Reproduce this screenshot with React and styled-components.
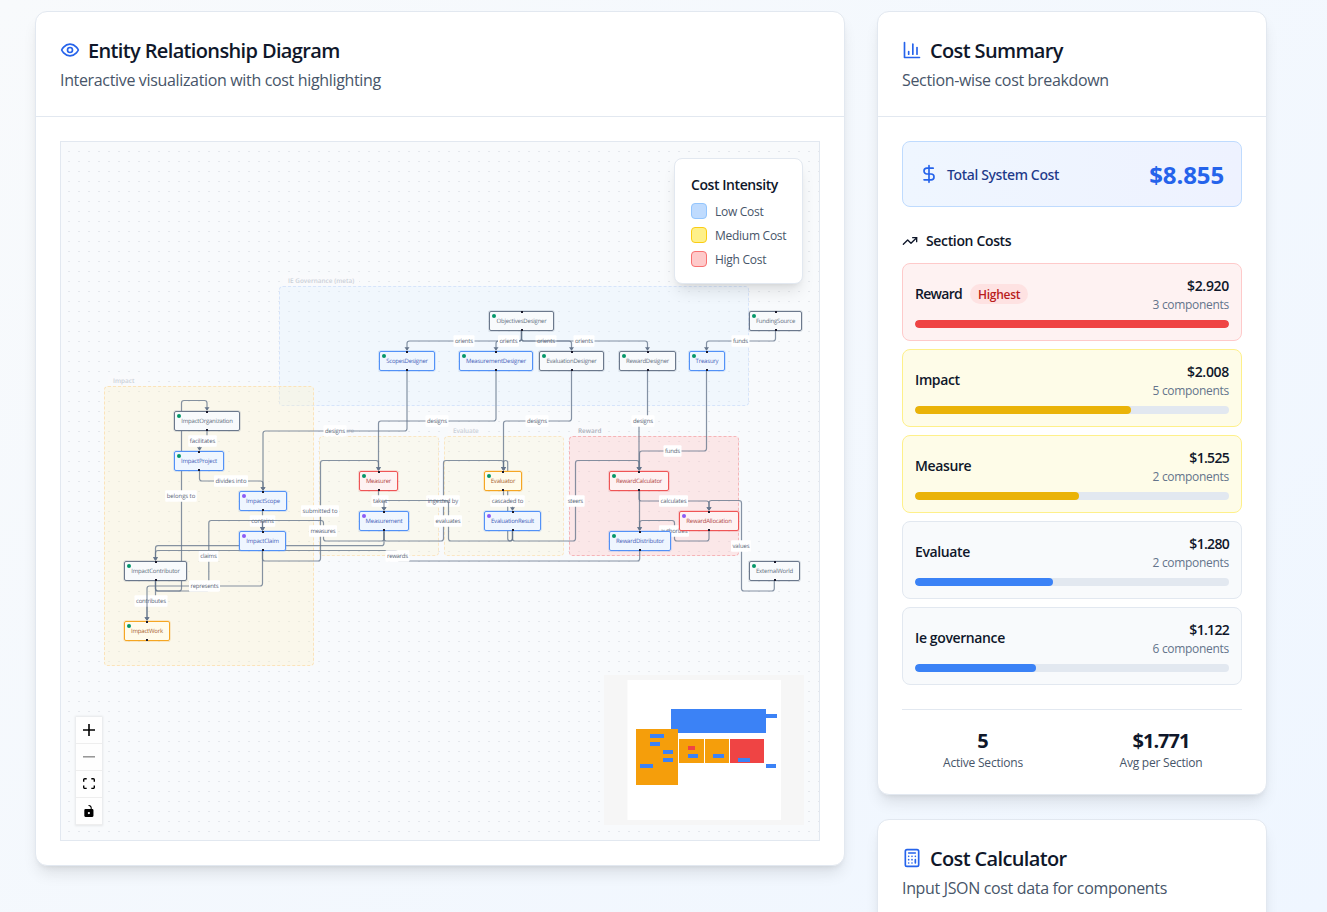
import React from "react";
import styled, { createGlobalStyle } from "styled-components";

const GlobalStyle = createGlobalStyle`
  *, *::before, *::after { box-sizing: border-box; }
  html, body { margin: 0; height: 912px; overflow: hidden; }
  body {
    font-family: "Open Sans", "Noto Sans", sans-serif;
    color: #0f172a;
    background: linear-gradient(135deg, #f8fafc 0%, #eff6ff 100%);
  }
  p, h2, h3, h4 { margin: 0; }
`;

/* ---------- page ---------- */
const Page = styled.main`
  display: grid;
  grid-template-columns: 810px 390px;
  column-gap: 32px;
  align-items: start;
  padding: 11px 0 0 35px;
  height: 912px;
  overflow: hidden;
`;
const Column = styled.div`
  display: flex;
  flex-direction: column;
  gap: 24px;
`;
const Card = styled.section`
  background: #fff;
  border: 1px solid #e2e8f0;
  border-radius: 12px;
  box-shadow: 0 10px 15px -3px rgba(0, 0, 0, 0.1), 0 4px 6px -4px rgba(0, 0, 0, 0.1);
`;
const CardHeader = styled.header`
  height: 105px;
  padding: 24px 24px 0;
  border-bottom: 1px solid #e2e8f0;
`;
const CardTitle = styled.h2`
  display: flex;
  align-items: center;
  gap: 8px;
  height: 28px;
  font-size: 20px;
  font-weight: 600;
  line-height: 28px;
  letter-spacing: -0.64px;
  svg { color: #2563eb; flex: none; }
  span { padding-top: 2px; }
`;
const CardSubtitle = styled.p`
  margin-top: 4px;
  font-size: 16px;
  line-height: 24px;
  letter-spacing: -0.34px;
  color: #475569;
`;
const CardBody = styled.div`
  padding: 24px;
`;

/* ---------- icons ---------- */
const Icon = ({ size = 20, children }) => (
  <svg width={size} height={size} viewBox="0 0 24 24" fill="none" stroke="currentColor"
    strokeWidth="2" strokeLinecap="round" strokeLinejoin="round">{children}</svg>
);
const EyeIcon = () => (
  <Icon><path d="M2 12s3-7 10-7 10 7 10 7-3 7-10 7-10-7-10-7Z" /><circle cx="12" cy="12" r="3" /></Icon>
);
const ChartIcon = () => (
  <Icon><path d="M3 3v18h18" /><path d="M18 17V9" /><path d="M13 17V5" /><path d="M8 17v-3" /></Icon>
);
const DollarIcon = () => (
  <Icon><path d="M12 2v20" /><path d="M17 5H9.5a3.5 3.5 0 0 0 0 7h5a3.5 3.5 0 0 1 0 7H6" /></Icon>
);
const TrendIcon = () => (
  <Icon size={16}><path d="M22 7l-8.5 8.5-5-5L2 17" /><path d="M16 7h6v6" /></Icon>
);
const CalculatorIcon = () => (
  <Icon>
    <rect width="16" height="20" x="4" y="2" rx="2" />
    <path d="M8 6h8M16 14v4M16 10h.01M12 10h.01M8 10h.01M12 14h.01M8 14h.01M12 18h.01M8 18h.01" />
  </Icon>
);

/* ---------- diagram canvas ---------- */
const ORIGIN_X = 61;
const ORIGIN_Y = 142;

const Canvas = styled.div`
  position: relative;
  height: 700px;
  overflow: hidden;
  background: #f8fafc;
  border: 1px solid #e2e8f0;
`;
const Layer = styled.svg`
  position: absolute;
  inset: 0;
  display: block;
`;

const groupTones = {
  blue: { fill: "rgba(224, 242, 254, 0.3)", line: "#d6e4fb" },
  amber: { fill: "rgba(254, 243, 199, 0.32)", line: "#fbe3ba" },
  pale: { fill: "rgba(254, 243, 199, 0.24)", line: "#fae6c4" },
  red: { fill: "rgba(254, 202, 202, 0.4)", line: "#f5b4b7" },
};
const Group = styled.div`
  position: absolute;
  left: ${(p) => p.$x - ORIGIN_X}px;
  top: ${(p) => p.$y - ORIGIN_Y}px;
  width: ${(p) => p.$w}px;
  height: ${(p) => p.$h}px;
  border: 1px dashed ${(p) => groupTones[p.$tone].line};
  border-radius: 4px;
  background: ${(p) => groupTones[p.$tone].fill};
`;
const GroupLabel = styled.span`
  position: absolute;
  left: 3px;
  top: -12px;
  padding: 0 5px;
  font-size: 6.4px;
  font-weight: 600;
  line-height: 11px;
  white-space: nowrap;
  text-rendering: geometricPrecision;
  letter-spacing: ${(p) => (p.$wide ? 0.02 : -0.1)}px;
  color: ${(p) => (p.$strong ? "#a9aeb9" : "#cbd0d8")};
  background: #f9fafc;
`;

const nodeTones = {
  plain: { line: "#6b788c", fill: "#f8fafc", text: "#64707f" },
  blue: { line: "#5291f7", fill: "#eff6ff", text: "#4560b8" },
  amber: { line: "#f5a623", fill: "#fffbeb", text: "#a8622f" },
  red: { line: "#ef5556", fill: "#fef2f2", text: "#b04444" },
};
const Node = styled.div`
  position: absolute;
  left: ${(p) => p.$x - ORIGIN_X}px;
  top: ${(p) => p.$y - ORIGIN_Y}px;
  width: ${(p) => p.$w}px;
  height: 20px;
  display: flex;
  align-items: center;
  justify-content: center;
  border: 1px solid ${(p) => nodeTones[p.$tone].line};
  outline: 1px solid ${(p) => nodeTones[p.$tone].line}33;
  border-radius: 2px;
  background: ${(p) => nodeTones[p.$tone].fill};
  color: ${(p) => nodeTones[p.$tone].text};
  font-size: 6px;
  letter-spacing: -0.21px;
  white-space: nowrap;
  text-rendering: geometricPrecision;
  &::before, &::after {
    content: "";
    position: absolute;
    left: calc(50% - 1px);
    width: 2px;
    height: 2px;
    background: #1a192b;
  }
  &::before { top: -1px; }
  &::after { bottom: -1px; }
`;
const StatusDot = styled.i`
  position: absolute;
  left: 2px;
  top: 2px;
  width: 4px;
  height: 4px;
  border-radius: 50%;
  background: ${(p) => (p.$artifact ? "#8b5cf6" : "#059669")};
`;

const groups = [
  { x: 279, y: 286, w: 470, h: 120, tone: "blue", label: "IE Governance (meta)", wide: true },
  { x: 104, y: 386, w: 210, h: 280, tone: "amber", label: "Impact", wide: true },
  { x: 319, y: 436, w: 120, h: 120, tone: "pale", label: "Measure" },
  { x: 444, y: 436, w: 120, h: 120, tone: "pale", label: "Evaluate" },
  { x: 569, y: 436, w: 170, h: 120, tone: "red", label: "Reward", strong: true, wide: true },
];

const nodes = [
  ["ObjectivesDesigner", 489, 311, 65, "plain"],
  ["FundingSource", 749, 311, 53, "plain"],
  ["ScopesDesigner", 379, 351, 56, "blue"],
  ["MeasurementDesigner", 459, 351, 74, "blue"],
  ["EvaluationDesigner", 539, 351, 65, "plain"],
  ["RewardDesigner", 619, 351, 57, "plain"],
  ["Treasury", 689, 351, 36, "blue"],
  ["ImpactOrganization", 174, 411, 66, "plain"],
  ["ImpactProject", 174, 451, 50, "blue"],
  ["ImpactScope", 239, 491, 48, "blue", true],
  ["ImpactClaim", 239, 531, 47, "blue", true],
  ["ImpactContributor", 124, 561, 63, "plain"],
  ["ImpactWork", 124, 621, 46, "amber"],
  ["Measurer", 359, 471, 39, "red"],
  ["Measurement", 359, 511, 50, "blue", true],
  ["Evaluator", 484, 471, 38, "amber"],
  ["EvaluationResult", 484, 511, 57, "blue", true],
  ["RewardCalculator", 609, 471, 60, "red"],
  ["RewardAllocation", 679, 511, 60, "red", true],
  ["RewardDistributor", 609, 531, 62, "blue"],
  ["ExternalWorld", 749, 561, 51, "plain"],
];

/* points, then an optional label: [text, centre x, centre y, text width] */
const edges = [
  [[[521.5, 331], [521.5, 341], [407, 341], [407, 350]], ["orients", 464, 341, 18]],
  [[[521.5, 331], [521.5, 341], [496, 341], [496, 350]], ["orients", 508.5, 341, 18]],
  [[[521.5, 331], [521.5, 341], [571.5, 341], [571.5, 350]], ["orients", 546, 341, 18]],
  [[[521.5, 331], [521.5, 341], [647.5, 341], [647.5, 350]], ["orients", 584, 341, 18]],
  [[[775.5, 331], [775.5, 341], [706.5, 341], [706.5, 350]], ["funds", 740.5, 341, 15]],
  [[[407, 371], [407, 431], [263, 431], [263, 490]], ["designs", 335, 431, 20]],
  [[[496, 371], [496, 421], [378.5, 421], [378.5, 470]], ["designs", 437, 421, 20]],
  [[[571.5, 371], [571.5, 421], [503.5, 421], [503.5, 470]], ["designs", 537, 421, 20]],
  [[[647.5, 371], [647.5, 421], [639, 421], [639, 470]], ["designs", 643, 421, 20]],
  [[[207, 431], [207, 441], [199.5, 441], [199.5, 450]], ["facilitates", 202.5, 441, 25.5]],
  [[[155.5, 581], [155.5, 591], [181.5, 591], [181.5, 400.5], [207, 400.5], [207, 410]], ["belongs to", 181, 496, 28.5]],
  [[[199.5, 471], [199.5, 481], [263, 481], [263, 490]], ["divides into", 231, 481, 31]],
  [[[262.5, 511], [262.5, 530]], ["contains", 262.5, 521, 22.5]],
  [[[155.5, 581], [155.5, 601], [147, 601], [147, 620]], ["contributes", 151, 601, 30]],
  [[[155.5, 581], [155.5, 591], [208.8, 591], [208.8, 520.5], [262.5, 520.5], [262.5, 530]], ["claims", 208.5, 556, 16.5]],
  [[[262.5, 551], [262.5, 586], [147, 586], [147, 620]], ["represents", 204.5, 586, 28]],
  [[[262.5, 551], [262.5, 561], [320.5, 561], [320.5, 460.5], [378.5, 460.5], [378.5, 470]], ["submitted to", 320, 511, 35]],
  [[[378.5, 491], [378.5, 501], [384, 501], [384, 510]], ["takes", 380, 501, 14]],
  [[[384, 531], [384, 541], [443.5, 541], [443.5, 460.5], [503.5, 460.5], [503.5, 470]], ["ingested by", 443, 501, 30.5]],
  [[[384, 531], [384, 541], [323.5, 541], [323.5, 520.5], [262.5, 520.5], [262.5, 530]], ["measures", 323, 531, 25]],
  [[[384, 531], [384, 545.7], [155.5, 545.7], [155.5, 560]]],
  [[[512.5, 531], [512.5, 541], [507.7, 541], [507.7, 460.5], [503.5, 460.5], [503.5, 470]]],
  [[[503.5, 491], [503.5, 501], [512.5, 501], [512.5, 510]], ["cascaded to", 507.5, 501, 31.5]],
  [[[512.5, 531], [512.5, 541], [448.5, 541], [448.5, 500.5], [384, 500.5], [384, 510]], ["evaluates", 448, 521, 25]],
  [[[512.5, 531], [512.5, 541], [575.5, 541], [575.5, 460.5], [639, 460.5], [639, 470]], ["steers", 575.5, 501, 15.3]],
  [[[706.5, 371], [706.5, 451], [639.5, 451], [639.5, 470]], ["funds", 672.5, 451, 15]],
  [[[639, 491], [639, 501], [709, 501], [709, 510]], ["calculates", 673.5, 501, 26]],
  [[[639.5, 491], [639.5, 530]]],
  [[[709, 531], [709, 541], [674.5, 541], [674.5, 520.5], [639.7, 520.5], [639.7, 530]], ["authorizes", 674, 531, 27]],
  [[[639.7, 551], [639.7, 561], [397.5, 561], [397.5, 550.5], [155.5, 550.5], [155.5, 560]], ["rewards", 397.5, 556, 21]],
  [[[774.3, 581], [774.3, 591], [741.5, 591], [741.5, 500.5], [709, 500.5], [709, 510]], ["values", 741, 546, 17]],
];

function roundedPath(points) {
  let d = `M${points[0][0]} ${points[0][1]}`;
  for (let i = 1; i < points.length - 1; i++) {
    const [px, py] = points[i - 1];
    const [x, y] = points[i];
    const [nx, ny] = points[i + 1];
    const before = Math.abs(px - x) + Math.abs(py - y);
    const after = Math.abs(nx - x) + Math.abs(ny - y);
    const r = Math.min(2.5, before / 2, after / 2);
    d += `L${x + Math.sign(px - x) * r} ${y + Math.sign(py - y) * r}`;
    d += `Q${x} ${y} ${x + Math.sign(nx - x) * r} ${y + Math.sign(ny - y) * r}`;
  }
  const [ex, ey] = points[points.length - 1];
  return `${d}L${ex} ${ey}`;
}

const EdgeLine = styled.path`
  fill: none;
  stroke: #64748b;
  stroke-opacity: 0.78;
  stroke-width: 1.2px;
`;
const ArrowHead = styled.path`
  fill: #64748b;
`;
const EdgeText = styled.text`
  font-size: 6px;
  fill: #5a6677;
  text-anchor: middle;
  text-rendering: geometricPrecision;
`;

function Edge({ points, label }) {
  const [ex, ey] = points[points.length - 1];
  return (
    <g>
      <EdgeLine d={roundedPath(points)} />
      <ArrowHead d={`M${ex - 2.5} ${ey - 2.8}h5L${ex} ${ey + 0.8}z`} />
      {label && (
        <>
          <rect x={label[1] - label[3] / 2 - 1.5} y={label[2] - 5.7} width={label[3] + 3} height={11.4} rx="1" fill="#fff" />
          <EdgeText x={label[1]} y={label[2] + 2} textLength={label[3]}>{label[0]}</EdgeText>
        </>
      )}
    </g>
  );
}

/* ---------- legend ---------- */
const Legend = styled.aside`
  position: absolute;
  top: 16px;
  right: 16px;
  width: 129px;
  height: 126px;
  padding: 16px 15px;
  background: #fff;
  border: 1px solid #e2e8f0;
  border-radius: 8px;
  box-shadow: 0 10px 15px -3px rgba(0, 0, 0, 0.1), 0 4px 6px -4px rgba(0, 0, 0, 0.1);
`;
const LegendTitle = styled.h4`
  margin-bottom: 8px;
  padding-left: 1px;
  font-size: 14px;
  font-weight: 600;
  line-height: 20px;
  letter-spacing: -0.43px;
  white-space: nowrap;
`;
const LegendRow = styled.div`
  display: flex;
  align-items: center;
  gap: 8px;
  height: 16px;
  margin-bottom: 8px;
  padding-left: 1px;
  font-size: 12px;
  letter-spacing: -0.27px;
  color: #475569;
  white-space: nowrap;
`;
const Swatch = styled.span`
  width: 16px;
  height: 16px;
  border-radius: 4px;
  border: 1px solid ${(p) => p.$line};
  background: ${(p) => p.$fill};
`;

/* ---------- zoom controls ---------- */
const Controls = styled.div`
  position: absolute;
  left: 15px;
  bottom: 15px;
  display: flex;
  flex-direction: column;
  box-shadow: 0 0 2px 1px rgba(0, 0, 0, 0.08);
`;
const ControlButton = styled.button`
  display: flex;
  align-items: center;
  justify-content: center;
  width: 26px;
  height: 27px;
  padding: 0;
  border: 0;
  border-bottom: 1px solid #eee;
  background: #fefefe;
  svg { width: 12px; max-height: 12px; fill-opacity: ${(p) => (p.disabled ? 0.4 : 1)}; }
`;

/* ---------- minimap ---------- */
const MiniMap = styled.svg`
  position: absolute;
  right: 15px;
  bottom: 15px;
  display: block;
`;
const miniRects = [
  [671, 709, 95, 24, "#3b82f6"], [636, 729, 42, 56, "#f59e0b"], [679, 739, 25, 24, "#f59e0b"],
  [705, 739, 24, 24, "#f59e0b"], [730, 739, 34, 24, "#ef4444"], [766, 714, 11, 4, "#3b82f6"],
  [650, 734, 14, 4, "#3b82f6"], [650, 742, 10, 4, "#3b82f6"], [663, 750, 10, 4, "#3b82f6"],
  [663, 758, 10, 4, "#3b82f6"], [640, 764, 13, 4, "#3b82f6"], [688, 746, 7, 4, "#ef4444"],
  [688, 754, 10, 4, "#3b82f6"], [713, 754, 11, 4, "#3b82f6"], [738, 758, 12, 4, "#3b82f6"],
  [766, 764, 10, 4, "#3b82f6"],
];

function Diagram() {
  return (
    <Canvas>
      <Layer width="758" height="698">
        <defs>
          <pattern id="dots" x="7" y="9" width="10" height="10" patternUnits="userSpaceOnUse">
            <rect width="2" height="1" fill="#e4e7ec" />
          </pattern>
        </defs>
        <rect width="758" height="698" fill="url(#dots)" />
      </Layer>
      {groups.map((g) => (
        <Group key={g.label} $x={g.x} $y={g.y} $w={g.w} $h={g.h} $tone={g.tone}>
          <GroupLabel $strong={g.strong} $wide={g.wide}>{g.label}</GroupLabel>
        </Group>
      ))}
      <Layer width="758" height="698" viewBox="61 142 758 698">
        {edges.map(([points, label], i) => <Edge key={i} points={points} label={label} />)}
      </Layer>
      {nodes.map(([name, x, y, w, tone, artifact]) => (
        <Node key={name} $x={x} $y={y} $w={w} $tone={tone}>
          <StatusDot $artifact={artifact} />
          {name}
        </Node>
      ))}
      <Legend>
        <LegendTitle>Cost Intensity</LegendTitle>
        <LegendRow><Swatch $fill="#bfdbfe" $line="#93c5fd" />Low Cost</LegendRow>
        <LegendRow><Swatch $fill="#fef08a" $line="#facc15" />Medium Cost</LegendRow>
        <LegendRow><Swatch $fill="#fecaca" $line="#f87171" />High Cost</LegendRow>
      </Legend>
      <Controls>
        <ControlButton aria-label="Zoom in">
          <svg viewBox="0 0 32 32"><path d="M32 18.133H18.133V32h-4.266V18.133H0v-4.266h13.867V0h4.266v13.867H32z" /></svg>
        </ControlButton>
        <ControlButton aria-label="Zoom out" disabled>
          <svg viewBox="0 0 32 5"><path d="M0 0h32v4.2H0z" /></svg>
        </ControlButton>
        <ControlButton aria-label="Fit view">
          <svg viewBox="0 0 32 30"><path d="M3.692 4.63c0-.53.4-.938.939-.938h5.215V0H4.708C2.13 0 0 2.054 0 4.63v5.216h3.692V4.631zM27.354 0h-5.2v3.692h5.17c.53 0 .984.4.984.939v5.215H32V4.631A4.624 4.624 0 0027.354 0zm.954 24.83c0 .532-.4.94-.939.94h-5.215v3.768h5.215c2.577 0 4.631-2.13 4.631-4.707v-5.139h-3.692v5.139zm-23.677.94c-.531 0-.939-.4-.939-.94v-5.138H0v5.139c0 2.577 2.13 4.707 4.708 4.707h5.138V25.77H4.631z" /></svg>
        </ControlButton>
        <ControlButton aria-label="Toggle interactivity">
          <svg viewBox="0 0 25 32"><path d="M21.333 10.667H19.81V7.619C19.81 3.429 16.38 0 12.19 0c-4.114 1.828-1.37 2.133.305 2.438 1.676.305 4.42 2.59 4.42 5.181v3.048H3.047A3.056 3.056 0 000 13.714v15.238A3.056 3.056 0 003.048 32h18.285a3.056 3.056 0 003.048-3.048V13.714a3.056 3.056 0 00-3.048-3.047zM12.19 24.533a3.056 3.056 0 01-3.047-3.047 3.056 3.056 0 013.047-3.048 3.056 3.056 0 013.048 3.048 3.056 3.056 0 01-3.048 3.047z" /></svg>
        </ControlButton>
      </Controls>
      <MiniMap width="200" height="150" viewBox="604 675 200 150">
        <rect x="604" y="675" width="200" height="150" fill="#f6f6f6" />
        <rect x="627.5" y="680" width="153.5" height="140" fill="#fff" />
        {miniRects.map(([x, y, w, h, fill], i) => (
          <rect key={i} x={x} y={y} width={w} height={h} fill={fill} shapeRendering="crispEdges" />
        ))}
      </MiniMap>
    </Canvas>
  );
}

/* ---------- cost summary ---------- */
const TotalBox = styled.div`
  display: flex;
  align-items: center;
  justify-content: space-between;
  height: 66px;
  padding: 0 17px 0 16px;
  border: 1px solid #bfdbfe;
  border-radius: 8px;
  background: linear-gradient(90deg, #eff6ff, #eef2ff);
`;
const TotalLabel = styled.div`
  display: flex;
  align-items: center;
  gap: 8px;
  font-family: "Noto Sans", sans-serif;
  font-size: 14px;
  font-weight: 500;
  letter-spacing: -0.35px;
  color: #1e3a8a;
  svg { color: #2563eb; }
`;
const TotalAmount = styled.strong`
  padding-top: 2px;
  font-size: 24px;
  font-weight: 700;
  line-height: 32px;
  letter-spacing: -0.1px;
  color: #2563eb;
`;
const SectionHeading = styled.h3`
  display: flex;
  align-items: center;
  gap: 8px;
  height: 20px;
  margin: 24px 0 12px;
  font-size: 14px;
  font-weight: 600;
  line-height: 20px;
  letter-spacing: -0.35px;
`;
const SectionList = styled.div`
  display: flex;
  flex-direction: column;
  gap: 8px;
`;
const levels = {
  high: { bg: "#fef2f2", line: "#fecaca", bar: "#ef4444" },
  medium: { bg: "#fefce8", line: "#fef08a", bar: "#eab308" },
  low: { bg: "#f8fafc", line: "#e2e8f0", bar: "#3b82f6" },
};
const SectionCard = styled.article`
  height: 78px;
  padding: 12px;
  border: 1px solid ${(p) => levels[p.$level].line};
  border-radius: 8px;
  background: ${(p) => levels[p.$level].bg};
`;
const SectionTop = styled.div`
  display: flex;
  align-items: center;
  justify-content: space-between;
  height: 36px;
  margin-bottom: 8px;
`;
const SectionName = styled.div`
  display: flex;
  align-items: center;
  gap: 8px;
  font-size: 14px;
  font-weight: 600;
  line-height: 20px;
  letter-spacing: ${(p) => (p.$tight ? -0.7 : -0.38)}px;
`;
const Pill = styled.span`
  height: 20px;
  padding: 0 8px;
  border-radius: 10px;
  background: #fee2e2;
  color: #b91c1c;
  font-size: 12px;
  line-height: 21px;
  letter-spacing: -0.3px;
`;
const SectionNumbers = styled.div`
  text-align: right;
`;
const SectionCost = styled.div`
  font-size: 14px;
  font-weight: 600;
  line-height: 20px;
  letter-spacing: ${(p) => (p.$tight ? -0.7 : -0.3)}px;
`;
const SectionCount = styled.div`
  font-size: 12px;
  line-height: 16px;
  letter-spacing: -0.3px;
  color: #64748b;
  padding-top: 1px;
`;
const Track = styled.div`
  height: 8px;
  border-radius: 4px;
  background: #e2e8f0;
  overflow: hidden;
`;
const Fill = styled.div`
  height: 8px;
  border-radius: 4px;
  background: ${(p) => levels[p.$level].bar};
`;
const Stats = styled.div`
  display: grid;
  grid-template-columns: 1fr 1fr;
  gap: 16px;
  height: 61px;
  margin-top: 24px;
  padding-top: 17px;
  border-top: 1px solid #e2e8f0;
  text-align: center;
`;
const StatValue = styled.div`
  font-size: 20px;
  font-weight: 700;
  line-height: 28px;
  letter-spacing: ${(p) => (p.$tight ? -1 : 0)}px;
`;
const StatLabel = styled.div`
  font-size: 12px;
  line-height: 16px;
  letter-spacing: -0.22px;
  color: #475569;
`;

const sections = [
  { name: "Reward", cost: 2920, count: 3, level: "high" },
  { name: "Impact", cost: 2008, count: 5, level: "medium" },
  { name: "Measure", cost: 1525, count: 2, level: "medium" },
  { name: "Evaluate", cost: 1280, count: 2, level: "low" },
  { name: "Ie governance", cost: 1122, count: 6, level: "low" },
];
const money = (n) => `$${(n / 1000).toFixed(3)}`;
const highest = sections[0].cost;

function Header({ icon, title, subtitle }) {
  return (
    <CardHeader>
      <CardTitle>{icon}<span>{title}</span></CardTitle>
      <CardSubtitle>{subtitle}</CardSubtitle>
    </CardHeader>
  );
}

export default function App() {
  return (
    <>
      <GlobalStyle />
      <Page>
        <Card>
          <Header icon={<EyeIcon />} title="Entity Relationship Diagram"
            subtitle="Interactive visualization with cost highlighting" />
          <CardBody><Diagram /></CardBody>
        </Card>
        <Column>
          <Card>
            <Header icon={<ChartIcon />} title="Cost Summary" subtitle="Section-wise cost breakdown" />
            <CardBody>
              <TotalBox>
                <TotalLabel><DollarIcon />Total System Cost</TotalLabel>
                <TotalAmount>$8.855</TotalAmount>
              </TotalBox>
              <SectionHeading><TrendIcon />Section Costs</SectionHeading>
              <SectionList>
                {sections.map((s) => (
                  <SectionCard key={s.name} $level={s.level}>
                    <SectionTop>
                      <SectionName $tight={s.level === "high"}>
                        {s.name}
                        {s.level === "high" && <Pill>Highest</Pill>}
                      </SectionName>
                      <SectionNumbers>
                        <SectionCost $tight={s.cost < 2000}>{money(s.cost)}</SectionCost>
                        <SectionCount>{s.count} components</SectionCount>
                      </SectionNumbers>
                    </SectionTop>
                    <Track><Fill $level={s.level} style={{ width: `${(s.cost / highest) * 100}%` }} /></Track>
                  </SectionCard>
                ))}
              </SectionList>
              <Stats>
                <div><StatValue>5</StatValue><StatLabel>Active Sections</StatLabel></div>
                <div><StatValue $tight>$1.771</StatValue><StatLabel>Avg per Section</StatLabel></div>
              </Stats>
            </CardBody>
          </Card>
          <Card>
            <Header icon={<CalculatorIcon />} title="Cost Calculator" subtitle="Input JSON cost data for components" />
            <CardBody />
          </Card>
        </Column>
      </Page>
    </>
  );
}
